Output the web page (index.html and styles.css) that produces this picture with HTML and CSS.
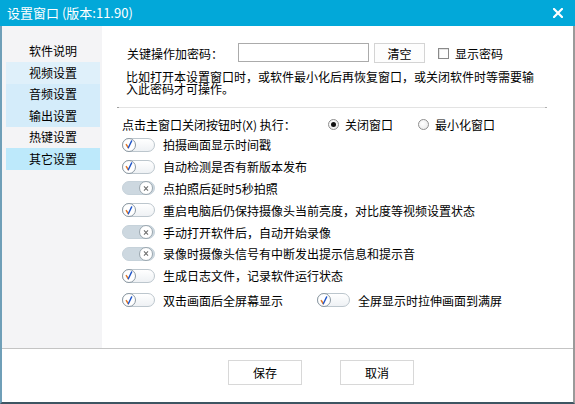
FILE: index.html
```html
<!DOCTYPE html>
<html lang="zh-CN">
<head>
<meta charset="utf-8">
<title>设置窗口</title>
<link rel="stylesheet" href="styles.css">
</head>
<body>
<div class="window">
  <div class="titlebar">
    <span class="title">设置窗口 (版本:11.90)</span>
    <svg class="close" width="10" height="10" viewBox="0 0 10 10"><path d="M1 1L9 9M9 1L1 9" stroke="#fff" stroke-width="2.2" stroke-linecap="square"/></svg>
  </div>
  <div class="frame">
    <div class="main">
      <nav class="sidebar">
        <div class="nav-item">软件说明</div>
        <div class="nav-item nav-video">视频设置</div>
        <div class="nav-item nav-audio">音频设置</div>
        <div class="nav-item nav-audio">输出设置</div>
        <div class="nav-item">热键设置</div>
        <div class="nav-item nav-active">其它设置</div>
      </nav>
      <div class="content">
        <div class="pwd-row">
          <span class="pwd-label">关键操作加密码：</span>
          <span class="input"></span>
          <span class="btn-small">清空</span>
          <span class="checkbox"></span>
          <span class="check-label">显示密码</span>
        </div>
        <div class="desc">比如打开本设置窗口时，或软件最小化后再恢复窗口，或关闭软件时等需要输<br>入此密码才可操作。</div>
        <div class="sep"></div>
        <div class="radio-row">
          <span class="radio-label">点击主窗口关闭按钮时(X) 执行：</span>
          <span class="radio checked"></span><span class="radio-text">关闭窗口</span>
          <span class="radio radio2"></span><span class="radio-text">最小化窗口</span>
        </div>

        <div class="opt"><span class="toggle on"><span class="knob"><svg width="13" height="13" viewBox="0 0 13 13"><path d="M3.6 6.6L5.8 10" stroke="#e0782a" stroke-width="1.6" fill="none" stroke-linecap="round"/><path d="M5.8 10L9.4 2.6" stroke="#1f54c8" stroke-width="1.5" fill="none" stroke-linecap="round"/></svg></span></span><span class="opt-text">拍摄画面显示时间戳</span></div>
        <div class="opt"><span class="toggle on"><span class="knob"><svg width="13" height="13" viewBox="0 0 13 13"><path d="M3.6 6.6L5.8 10" stroke="#e0782a" stroke-width="1.6" fill="none" stroke-linecap="round"/><path d="M5.8 10L9.4 2.6" stroke="#1f54c8" stroke-width="1.5" fill="none" stroke-linecap="round"/></svg></span></span><span class="opt-text">自动检测是否有新版本发布</span></div>
        <div class="opt"><span class="toggle off"><span class="knob"><svg width="13" height="13" viewBox="0 0 13 13"><path d="M4.3 4.3L8.7 8.7M8.7 4.3L4.3 8.7" stroke="#6a6a6a" stroke-width="1.1" fill="none"/></svg></span></span><span class="opt-text">点拍照后延时5秒拍照</span></div>
        <div class="opt"><span class="toggle on"><span class="knob"><svg width="13" height="13" viewBox="0 0 13 13"><path d="M3.6 6.6L5.8 10" stroke="#e0782a" stroke-width="1.6" fill="none" stroke-linecap="round"/><path d="M5.8 10L9.4 2.6" stroke="#1f54c8" stroke-width="1.5" fill="none" stroke-linecap="round"/></svg></span></span><span class="opt-text">重启电脑后仍保持摄像头当前亮度，对比度等视频设置状态</span></div>
        <div class="opt"><span class="toggle off"><span class="knob"><svg width="13" height="13" viewBox="0 0 13 13"><path d="M4.3 4.3L8.7 8.7M8.7 4.3L4.3 8.7" stroke="#6a6a6a" stroke-width="1.1" fill="none"/></svg></span></span><span class="opt-text">手动打开软件后，自动开始录像</span></div>
        <div class="opt"><span class="toggle off"><span class="knob"><svg width="13" height="13" viewBox="0 0 13 13"><path d="M4.3 4.3L8.7 8.7M8.7 4.3L4.3 8.7" stroke="#6a6a6a" stroke-width="1.1" fill="none"/></svg></span></span><span class="opt-text">录像时摄像头信号有中断发出提示信息和提示音</span></div>
        <div class="opt"><span class="toggle on"><span class="knob"><svg width="13" height="13" viewBox="0 0 13 13"><path d="M3.6 6.6L5.8 10" stroke="#e0782a" stroke-width="1.6" fill="none" stroke-linecap="round"/><path d="M5.8 10L9.4 2.6" stroke="#1f54c8" stroke-width="1.5" fill="none" stroke-linecap="round"/></svg></span></span><span class="opt-text">生成日志文件，记录软件运行状态</span></div>
        <div class="opt opt-last">
          <span class="toggle on"><span class="knob"><svg width="13" height="13" viewBox="0 0 13 13"><path d="M3.6 6.6L5.8 10" stroke="#e0782a" stroke-width="1.6" fill="none" stroke-linecap="round"/><path d="M5.8 10L9.4 2.6" stroke="#1f54c8" stroke-width="1.5" fill="none" stroke-linecap="round"/></svg></span></span><span class="opt-text opt-fixed">双击画面后全屏幕显示</span>
          <span class="toggle on"><span class="knob"><svg width="13" height="13" viewBox="0 0 13 13"><path d="M3.6 6.6L5.8 10" stroke="#e0782a" stroke-width="1.6" fill="none" stroke-linecap="round"/><path d="M5.8 10L9.4 2.6" stroke="#1f54c8" stroke-width="1.5" fill="none" stroke-linecap="round"/></svg></span></span><span class="opt-text">全屏显示时拉伸画面到满屏</span>
        </div>
      </div>
    </div>
    <div class="footer">
      <span class="btn">保存</span>
      <span class="btn">取消</span>
    </div>
  </div>
</div>
</body>
</html>
```

FILE: styles.css
```css
* { box-sizing: border-box; }
html, body { margin: 0; padding: 0; }
body {
  width: 575px;
  height: 404px;
  overflow: hidden;
  background: #fff;
  font-family: "Noto Sans CJK SC", "Noto Sans", sans-serif;
  font-size: 12px;
  color: #000;
}
.window { width: 575px; height: 404px; display: flex; flex-direction: column; }
.titlebar {
  height: 26px;
  background: #02a8d9;
  display: flex;
  align-items: center;
  padding: 0 12px 0 7px;
  color: #fff;
}
.title { font-size: 13px; line-height: 26px; flex: 1; }
.close { display: block; margin-top: -1px; }
.frame {
  height: 378px;
  border-left: 2px solid #6f9fb8;
  border-right: 2px solid #9a9a9a;
  border-bottom: 2px solid #3e5562;
  display: flex;
  flex-direction: column;
}
.main { height: 322px; display: flex; }
.sidebar {
  width: 100px;
  background: #f4f4f6;
  padding-top: 14.5px;
}
.nav-item {
  height: 21.5px;
  margin: 0 2px 0 4px;
  display: flex;
  align-items: center;
  justify-content: center;
  line-height: 1;
}
.nav-video { background: #dff0fa; }
.nav-audio { background: #d4ecfa; }
.nav-active { background: #bde9fb; }
.content { flex: 1; padding: 17px 0 0 20px; }
.pwd-row { height: 20px; display: flex; align-items: center; padding-left: 5px; }
.pwd-label { width: 111px; }
.input { width: 131px; height: 19px; border: 1px solid #ababab; background: #fff; align-self: flex-start; }
.btn-small {
  width: 51px; height: 20px; margin-left: 5px;
  border: 1px solid #d4d4d4; background: #fdfdfd;
  display: flex; align-items: center; justify-content: center;
}
.checkbox { width: 11px; height: 11px; border: 1px solid #8a8a8a; margin-left: 13px; background: #fff; box-shadow: inset 1px 1px 0 #e4e4e4; }
.check-label { margin-left: 6px; }
.desc { margin-top: 8px; padding-left: 4px; line-height: 12px; white-space: nowrap; }
.sep {
  margin: 12px 0 0 -5px;
  width: 430px;
  height: 1px;
  background: #e3e3e3;
  border-left: 2px solid #a0a0a0;
  border-right: 2px solid #b0b0b0;
}
.radio-row { margin-top: 6px; height: 20px; display: flex; align-items: center; }
.radio-label { width: 206px; }
.radio {
  width: 11px; height: 11px; border-radius: 50%;
  border: 1px solid #8e8e8e;
  background: radial-gradient(circle at 40% 40%, #fff, #e6e6e6);
  display: flex; align-items: center; justify-content: center;
}
.radio.checked::after { content: ""; width: 5px; height: 5px; border-radius: 50%; background: #111; }
.radio-text { margin-left: 6px; }
.radio2 { margin-left: 25px; }
.opt { height: 21.8px; display: flex; align-items: center; }
.opt-last { margin-top: 3px; }
.toggle {
  width: 33px; height: 14px; border-radius: 7px;
  display: flex; align-items: center;
  border: 1px solid #bcc6cd;
  flex: none;
}
.toggle.on { background: linear-gradient(#ffffff, #eef1f4); justify-content: flex-start; }
.toggle.off { background: #cdd8e0; border-color: #c6d2da; justify-content: flex-end; padding-right: 1px; }
.knob {
  width: 14px; height: 14px; margin: -1px;
  border-radius: 50%;
  border: 1px solid #8b98a2;
  background: #fff;
  display: flex; align-items: center; justify-content: center;
}
.toggle.off .knob { margin: -1px 0; border-color: #9aa6ae; }
.knob svg { display: block; }
.opt-text { margin-left: 8px; white-space: nowrap; }
.opt-fixed { width: 154px; }
.footer {
  flex: 1;
  border-top: 1px solid #c4c4c4;
  padding: 11px 0 0 226px;
  display: flex;
  align-items: flex-start;
  gap: 38px;
}
.btn {
  width: 74px; height: 25px;
  border: 1px solid #d8d8d8;
  background: #fff;
  display: flex; align-items: center; justify-content: center;
}
```
